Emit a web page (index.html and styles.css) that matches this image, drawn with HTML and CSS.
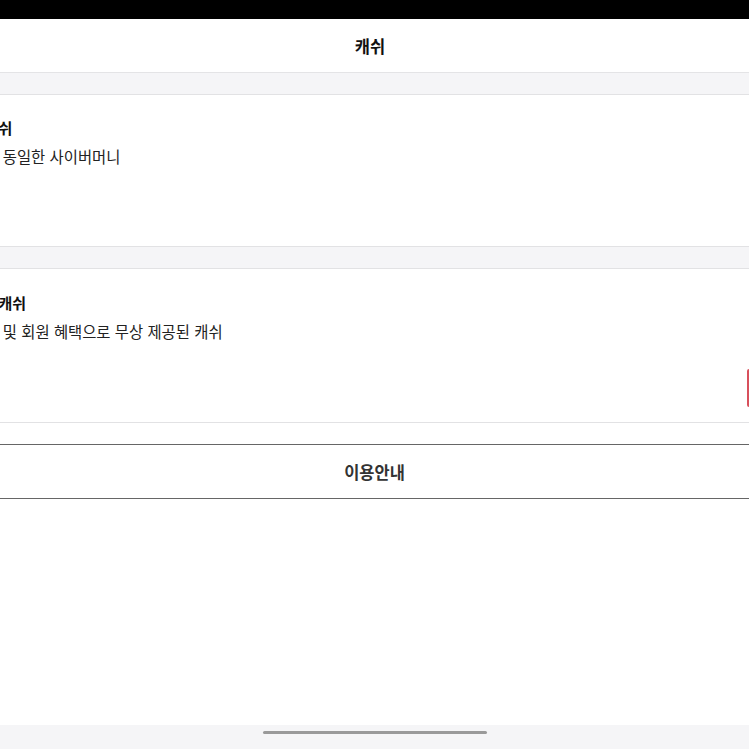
FILE: index.html
```html
<!DOCTYPE html>
<html lang="ko">
<head>
<meta charset="utf-8">
<title>캐쉬</title>
<link rel="stylesheet" href="styles.css">
</head>
<body>
<div class="screen">
  <div class="statusbar"></div>
  <header class="topbar"><h1 class="topbar-title">캐쉬</h1></header>
  <div class="gap"></div>
  <section class="card card-first">
    <div class="card-text">
      <div class="card-title">충전캐쉬</div>
      <div class="card-desc">현금과 동일한 사이버머니</div>
    </div>
  </section>
  <div class="gap"></div>
  <section class="card card-second">
    <div class="card-text">
      <div class="card-title">보너스캐쉬</div>
      <div class="card-desc">이벤트 및 회원 혜택으로 무상 제공된 캐쉬</div>
    </div>
    <div class="card-actions"><span class="edge-btn"></span></div>
  </section>
  <div class="spacer-small"></div>
  <button class="guide-btn">이용안내</button>
  <div class="fill"></div>
  <footer class="homebar"><span class="home-indicator"></span></footer>
</div>
</body>
</html>
```

FILE: styles.css
```css
* { box-sizing: border-box; }
html, body {
  margin: 0;
  padding: 0;
  width: 749px;
  height: 749px;
  overflow: hidden;
  background: #ffffff;
  font-family: "Noto Sans CJK KR", "Noto Sans", sans-serif;
}
.screen {
  display: flex;
  flex-direction: column;
  height: 749px;
  width: 749px;
  overflow: hidden;
}
.statusbar {
  height: 19px;
  background: #000;
  flex: none;
}
.topbar {
  height: 54px;
  flex: none;
  display: flex;
  align-items: center;
  justify-content: center;
  padding-right: 9px;
  background: #fff;
  border-bottom: 1px solid #e4e4e6;
}
.topbar-title {
  margin: 0;
  font-size: 16.5px;
  font-weight: 700;
  color: #111;
  line-height: 20px;
}
.gap {
  height: 22px;
  flex: none;
  background: #f5f5f7;
  border-bottom: 1px solid #e2e2e4;
}
.card {
  background: #fff;
  flex: none;
  border-bottom: 1px solid #e2e2e4;
  display: flex;
  flex-direction: column;
}
.card-first { height: 152px; }
.card-second { height: 154px; }
.card-second .card-text { padding-top: 24px; }
.card-text {
  margin-left: -43px;
  padding-top: 23px;
}
.card-title {
  font-size: 15px;
  font-weight: 700;
  color: #111;
  line-height: 20px;
}
.card-desc {
  margin-top: 8px;
  margin-left: -1px;
  font-size: 15.4px;
  color: #222;
  line-height: 20px;
}
.card-actions {
  display: flex;
  justify-content: flex-end;
  margin-top: 28px;
  margin-right: -80px;
}
.edge-btn {
  display: block;
  width: 82px;
  height: 38px;
  border: 2px solid #d8505c;
  border-radius: 2px;
  background: #fff;
}
.spacer-small { height: 21px; flex: none; }
.guide-btn {
  flex: none;
  height: 55px;
  width: 100%;
  margin: 0;
  background: #fff;
  border: none;
  border-top: 1.5px solid #666;
  border-bottom: 1.5px solid #666;
  font-family: inherit;
  font-size: 16.5px;
  font-weight: 700;
  color: #333;
  padding: 0;
}
.fill { flex: 1; background: #fff; }
.homebar {
  height: 24px;
  flex: none;
  background: #f5f5f7;
  display: flex;
  justify-content: center;
  padding-top: 6px;
}
.home-indicator {
  display: block;
  width: 224px;
  height: 3px;
  border-radius: 2px;
  background: #9a9a9a;
}
```
